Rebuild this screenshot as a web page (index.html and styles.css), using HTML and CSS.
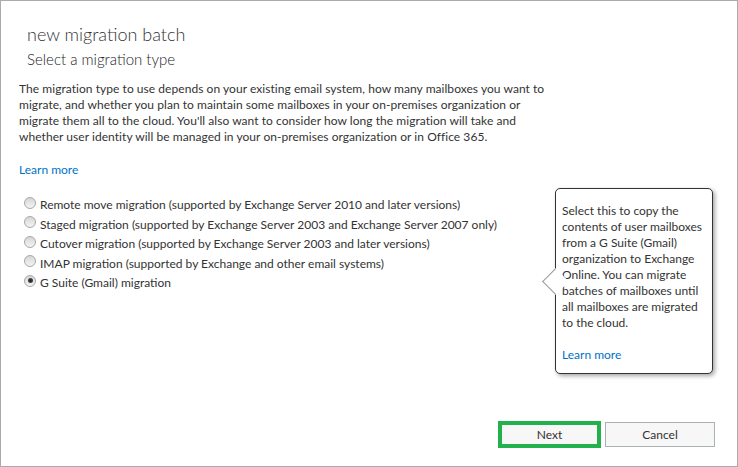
FILE: index.html
```html
<!DOCTYPE html>
<html lang="en">
<head>
<meta charset="UTF-8">
<title>new migration batch</title>
<link rel="stylesheet" href="styles.css">
</head>
<body>
<div class="dialog">
    <div class="content">
        <h1 class="title">new migration batch</h1>
        <h2 class="subtitle">Select a migration type</h2>
        <p class="intro">The migration type to use depends on your existing email system, how many mailboxes you want to migrate, and whether you plan to maintain some mailboxes in your on-premises organization or migrate them all to the cloud. You'll also want to consider how long the migration will take and whether user identity will be managed in your on-premises organization or in Office 365.</p>
        <a class="link" href="#">Learn more</a>
        <ul class="options">
            <li><span class="radio"></span>Remote move migration (supported by Exchange Server 2010 and later versions)</li>
            <li><span class="radio"></span>Staged migration (supported by Exchange Server 2003 and Exchange Server 2007 only)</li>
            <li><span class="radio"></span>Cutover migration (supported by Exchange Server 2003 and later versions)</li>
            <li><span class="radio"></span>IMAP migration (supported by Exchange and other email systems)</li>
            <li><span class="radio checked"></span>G Suite (Gmail) migration</li>
        </ul>
    </div>
    <div class="callout">
        <p>Select this to copy the contents of user mailboxes from a G Suite (Gmail) organization to Exchange Online. You can migrate batches of mailboxes until all mailboxes are migrated to the cloud.</p>
        <a class="link" href="#">Learn more</a>
    </div>
    <div class="footer">
        <button class="button next">Next</button>
        <button class="button">Cancel</button>
    </div>
</div>
</body>
</html>
```

FILE: styles.css
```css
body {
    margin: 0;
    background-color: white;
    font-family: Lato, "Open Sans", sans-serif;
    color: #333;
}
.dialog {
    position: relative;
    width: 738px;
    height: 467px;
    box-sizing: border-box;
    border: 1px solid #ababab;
    display: flex;
    flex-direction: column;
}
.content {
    padding: 22px 0 0 18px;
}
.title {
    margin: 0 0 4px 8px;
    font-size: 18px;
    font-weight: 300;
    line-height: 22px;
    color: #333;
}
.subtitle {
    margin: 0 0 12px 8px;
    font-size: 15px;
    font-weight: 300;
    line-height: 20px;
    color: #222;
}
.intro {
    margin: 0 0 17px 0;
    max-width: 532px;
    font-size: 12px;
    line-height: 16px;
    letter-spacing: 0.05px;
}
.link {
    display: block;
    font-size: 12px;
    line-height: 16px;
    color: #0072c6;
    text-decoration: none;
}
.options {
    list-style: none;
    margin: 17px 0 0 0;
    padding: 0;
    font-size: 12px;
}
.options li {
    display: flex;
    align-items: center;
    height: 19.5px;
}
.radio {
    width: 12px;
    height: 12px;
    box-sizing: border-box;
    border: 1px solid #a7a7a7;
    border-radius: 50%;
    background: linear-gradient(#d6d6d6, #f4f4f4);
    margin: 0 4px 0 5px;
    position: relative;
    top: -2px;
}
.radio.checked::after {
    content: "";
    position: absolute;
    left: 2.5px;
    top: 2.5px;
    width: 5px;
    height: 5px;
    border-radius: 50%;
    background: radial-gradient(#222, #555);
}
.callout {
    position: absolute;
    left: 554px;
    top: 187px;
    width: 158px;
    height: 186px;
    box-sizing: border-box;
    border: 1px solid #333;
    border-radius: 5px;
    background: white;
    box-shadow: 2px 2px 4px rgba(0, 0, 0, 0.35);
    padding: 14px 8px 0 6px;
    font-size: 12px;
    line-height: 16px;
}
.callout::before {
    content: "";
    position: absolute;
    left: -10px;
    top: 83px;
    width: 19px;
    height: 19px;
    box-sizing: border-box;
    background: white;
    border-left: 1px solid #999;
    border-bottom: 1px solid #999;
    transform: rotate(45deg);
}
.callout p {
    margin: 0 0 16px 0;
}
.footer {
    margin-top: auto;
    display: flex;
    justify-content: flex-end;
    align-items: center;
    gap: 4px;
    padding: 0 22px 18px 0;
}
.button {
    width: 110px;
    height: 25px;
    box-sizing: border-box;
    border: 1px solid #a9b2b4;
    background: #f7f7f7;
    font-family: Lato, "Open Sans", sans-serif;
    font-size: 12px;
    color: #333;
    padding: 0;
}
.button.next {
    width: 103px;
    height: 27px;
    border: 4px solid #22b14c;
}
```
